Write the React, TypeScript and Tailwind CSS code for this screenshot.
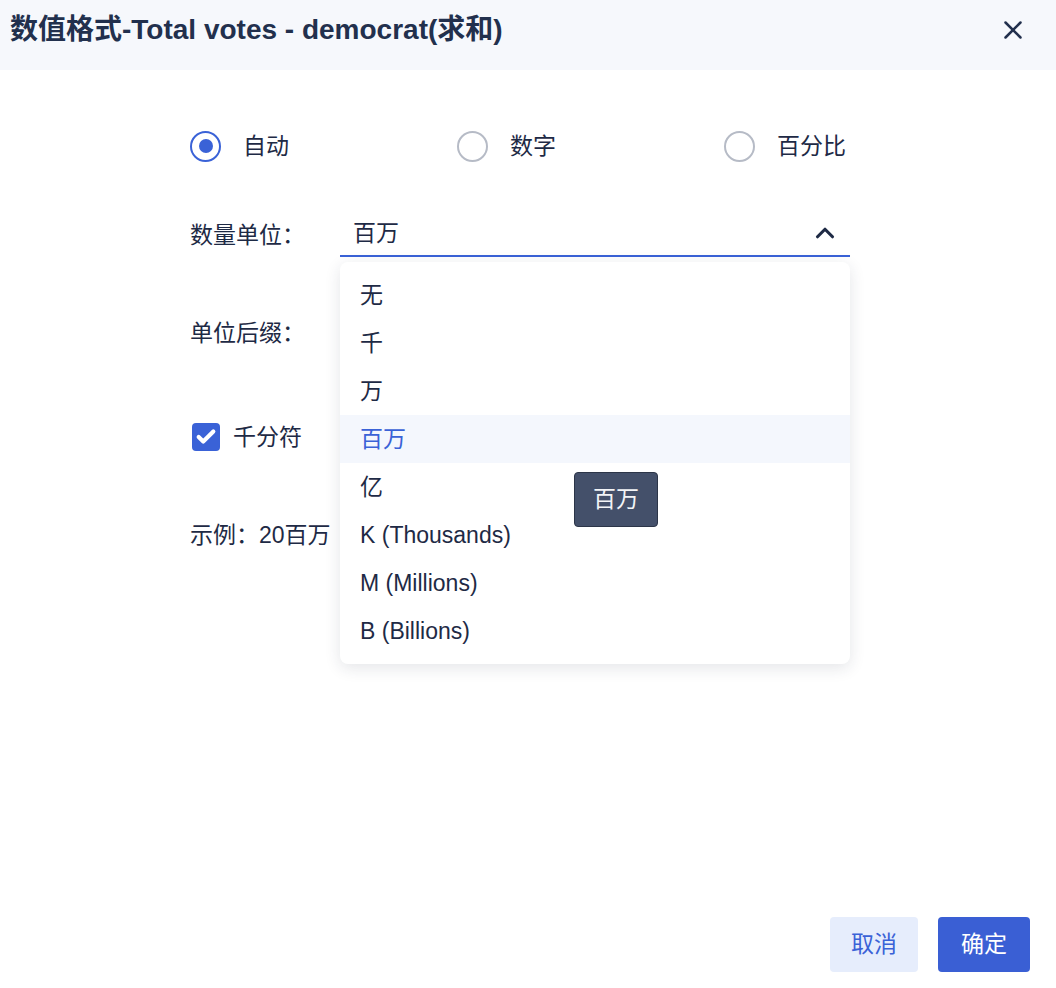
import { X, ChevronUp, Check } from 'lucide-react';

const units = ['无', '千', '万', '百万', '亿', 'K (Thousands)', 'M (Millions)', 'B (Billions)'];
const selectedUnit = '百万';

const formats = [
  { label: '自动', checked: true },
  { label: '数字', checked: false },
  { label: '百分比', checked: false },
];

const Radio = ({ label, checked }: { label: string; checked: boolean }) => (
  <label className="flex items-center gap-[22px] cursor-pointer">
    <span
      className={`w-[31px] h-[31px] rounded-full border-2 flex items-center justify-center ${
        checked ? 'border-[#3a62d7]' : 'border-[#b6bbc6]'
      }`}
    >
      {checked && <span className="w-[14px] h-[14px] rounded-full bg-[#3a62d7]" />}
    </span>
    <span>{label}</span>
  </label>
);

export default function App() {
  return (
    <div
      className="relative w-[1056px] h-[988px] bg-white text-[23px] text-[#1e2a45] overflow-hidden"
      style={{ fontFamily: '"Liberation Sans", "Noto Sans CJK SC", sans-serif' }}
    >
      {/* Header */}
      <div className="h-[70px] bg-[#f6f8fc] flex items-center justify-between pl-[10px] pr-[28px] pb-[10px]">
        <h1 className="text-[28px] font-bold text-[#22304d]">数值格式-Total votes - democrat(求和)</h1>
        <button className="text-[#22304d]">
          <X className="w-[30px] h-[30px]" strokeWidth={2} />
        </button>
      </div>

      {/* Body */}
      <div className="ml-[190px] w-[660px] flex flex-col">
        <div className="mt-[52px] h-[48px] flex items-center justify-between pr-[4px]">
          {formats.map((f) => (
            <Radio key={f.label} label={f.label} checked={f.checked} />
          ))}
        </div>

        <div className="mt-[41px] h-[48px] flex items-center">
          <span className="w-[150px] shrink-0">数量单位：</span>
          <div className="relative flex-1 h-[48px]">
            <div className="h-[46px] flex items-center justify-between pl-[13px] pr-[10px] border-b-2 border-[#3a62d7]">
              <span>{selectedUnit}</span>
              <ChevronUp className="w-[30px] h-[30px] text-[#1e2a45]" strokeWidth={2.5} />
            </div>

            {/* Dropdown */}
            <div className="absolute left-0 top-[51px] w-full bg-white rounded-lg shadow-[0_4px_16px_rgba(30,42,69,0.12)] py-[9px] z-10">
              {units.map((u) => (
                <div
                  key={u}
                  className={`h-[48px] flex items-center px-[20px] ${
                    u === selectedUnit ? 'bg-[#f4f7fd] text-[#3a62d7]' : ''
                  }`}
                >
                  {u}
                </div>
              ))}
              <div className="absolute left-[234px] top-[210px] w-[84px] h-[55px] rounded-[4px] bg-[#44506a] border border-[#2c3548] text-[#f3f4f7] flex items-center justify-center">
                百万
              </div>
            </div>
          </div>
        </div>

        <div className="mt-[50px] h-[48px] flex items-center">
          <span className="w-[150px] shrink-0">单位后缀：</span>
          <div className="flex-1 h-[46px] border-b border-[#d5d9e2]" />
        </div>

        <div className="mt-[56px] h-[48px] flex items-center gap-[13px]">
          <span className="ml-[2px] w-[28px] h-[28px] rounded-[4px] bg-[#3a62d7] flex items-center justify-center">
            <Check className="w-[22px] h-[22px] text-white" strokeWidth={4.5} />
          </span>
          <span>千分符</span>
        </div>

        <div className="mt-[50px] h-[48px] flex items-center">
          <span>示例：20百万</span>
        </div>
      </div>

      {/* Footer */}
      <div className="absolute right-[26px] bottom-[16px] flex gap-[20px]">
        <button className="w-[88px] h-[55px] rounded-[4px] bg-[#e6edfc] text-[#3a62d7]">取消</button>
        <button className="w-[92px] h-[55px] rounded-[4px] bg-[#3a5fd4] text-white">确定</button>
      </div>
    </div>
  );
}
